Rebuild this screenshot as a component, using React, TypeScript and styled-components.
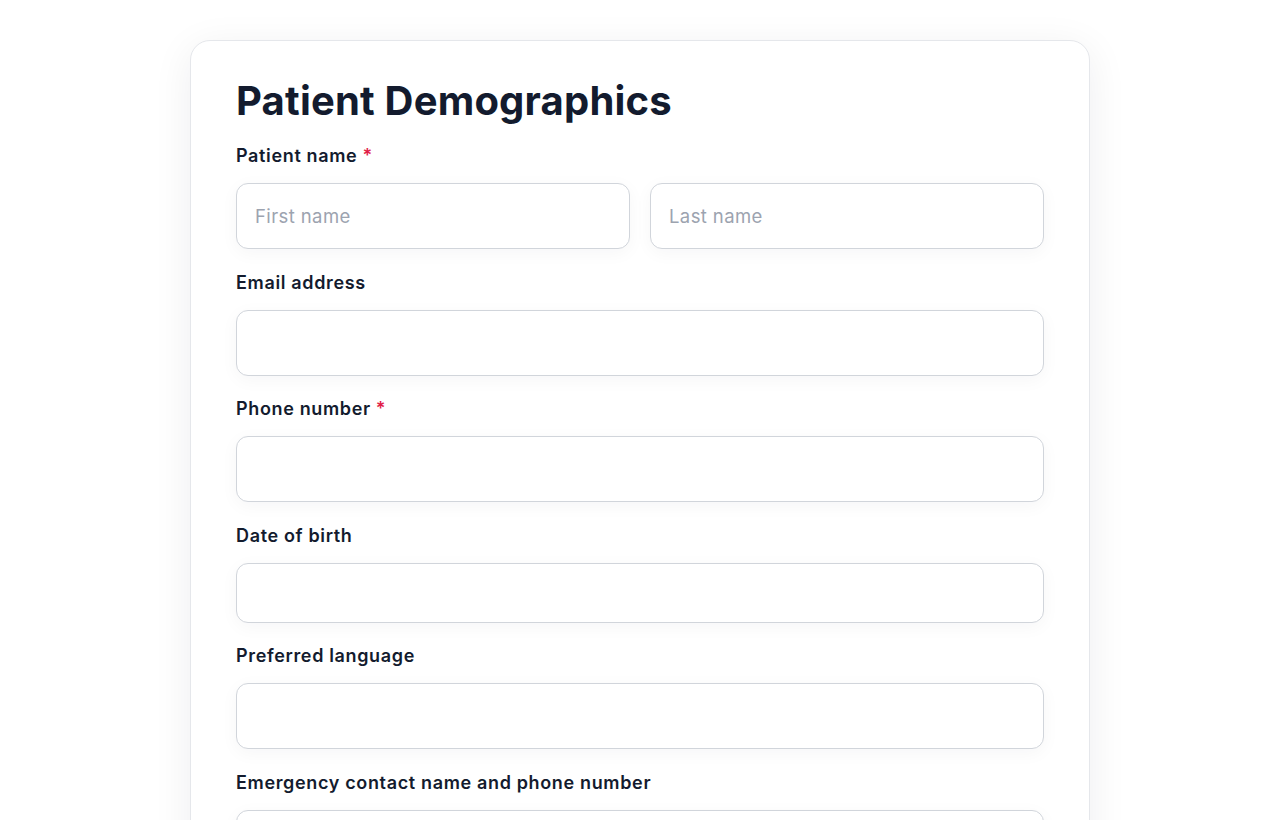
import React from 'react'
import styled, { createGlobalStyle } from 'styled-components'

const GlobalStyle = createGlobalStyle`
    html, body {
        margin: 0;
        padding: 0;
        background: #ffffff;
        font-family: 'Inter', 'Noto Sans', sans-serif;
        color: #111827;
    }
    * {
        box-sizing: border-box;
    }
`

const Page = styled.main`
    display: flex;
    justify-content: center;
    padding-top: 40px;
    min-height: 820px;
`

const Card = styled.section`
    width: 900px;
    background: #ffffff;
    border: 1px solid #e5e7eb;
    border-radius: 20px;
    box-shadow: 0 8px 40px rgba(17, 24, 39, 0.07);
    padding: 36px 45px 40px;
    display: flex;
    flex-direction: column;
`

const Title = styled.h1`
    margin: 0 0 17px;
    font-size: 40px;
    line-height: 48px;
    font-weight: 700;
    letter-spacing: 0.2px;
    color: #131b2e;
`

const Form = styled.form`
    display: flex;
    flex-direction: column;
    gap: 19.5px;
`

const Field = styled.div`
    display: flex;
    flex-direction: column;
    gap: 14px;
`

const Label = styled.label`
    font-size: 18px;
    line-height: 27px;
    font-weight: 600;
    letter-spacing: 0.65px;
    color: #131b2e;
`

const Required = styled.span`
    color: #e11d48;
    margin-left: 5px;
`

const Row = styled.div`
    display: grid;
    grid-template-columns: 1fr 1fr;
    gap: 20px;
`

const Input = styled.input<{ $height?: number }>`
    width: 100%;
    height: ${({ $height }) => $height ?? 66}px;
    border: 1px solid #d1d5db;
    border-radius: 12px;
    background: #ffffff;
    padding: 0 18px;
    font-family: inherit;
    font-size: 18.5px;
    letter-spacing: 0.4px;
    color: #111827;
    box-shadow: 0 4px 18px rgba(17, 24, 39, 0.04);
    outline: none;

    &::placeholder {
        color: #9ca3af;
    }
`

const App: React.FC = () => {
  return (
    <>
      <GlobalStyle />
      <Page>
        <Card>
          <Title>Patient Demographics</Title>
          <Form>
            <Field>
              <Label>
                Patient name<Required>*</Required>
              </Label>
              <Row>
                <Input placeholder="First name" />
                <Input placeholder="Last name" />
              </Row>
            </Field>
            <Field>
              <Label>Email address</Label>
              <Input type="email" />
            </Field>
            <Field>
              <Label>
                Phone number<Required>*</Required>
              </Label>
              <Input type="tel" />
            </Field>
            <Field>
              <Label>Date of birth</Label>
              <Input $height={60} />
            </Field>
            <Field>
              <Label>Preferred language</Label>
              <Input />
            </Field>
            <Field>
              <Label>Emergency contact name and phone number</Label>
              <Input />
            </Field>
          </Form>
        </Card>
      </Page>
    </>
  )
}

export default App
